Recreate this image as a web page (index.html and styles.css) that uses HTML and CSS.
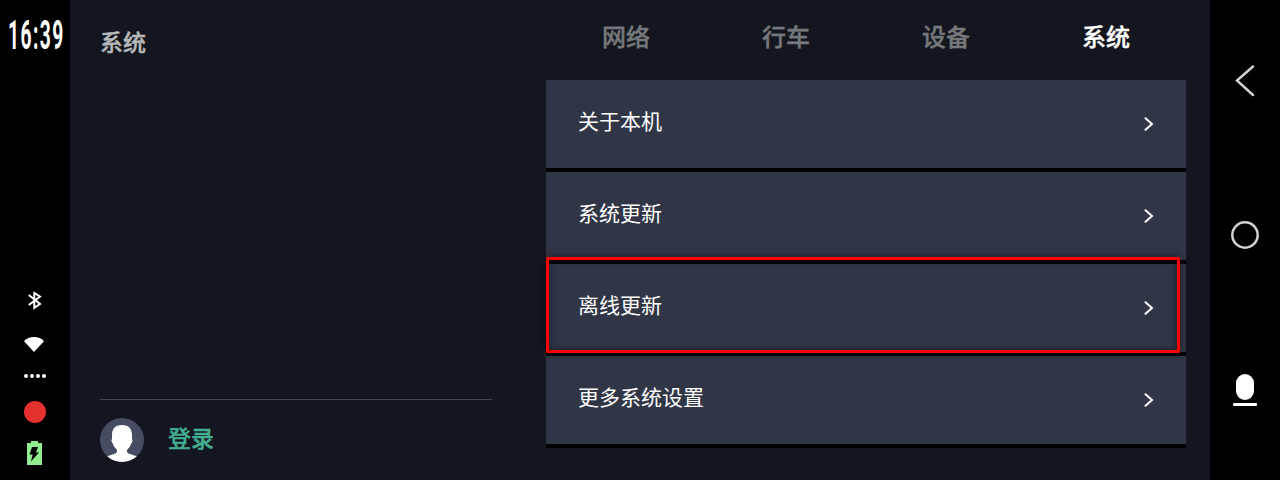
FILE: index.html
```html
<!DOCTYPE html>
<html lang="zh-CN">
  <head>
    <meta charset="UTF-8" />
    <meta name="viewport" content="width=device-width, initial-scale=1.0" />
    <title>系统</title>
    <link rel="stylesheet" href="styles.css">
  </head>
  <body>
    <div class="screen">
      <aside class="status-bar">
        <div class="clock"><span>16:39</span></div>
        <div class="status-icons">
          <svg class="bluetooth" width="14" height="20" viewBox="0 0 14 20">
            <path d="M.8 5L12 14 6.300 17.800V3L12 6.500 .8 15" />
          </svg>
          <svg class="wifi" width="20" height="15" viewBox="0 0 20 15">
            <path d="M0 4.2Q4 0 10 0T20 4.2L10 15Z" />
          </svg>
          <svg class="signal" width="22" height="4" viewBox="0 0 22 4">
            <circle cx="2" cy="2" r="2" />
            <circle cx="8" cy="2" r="2" />
            <circle cx="14" cy="2" r="2" />
            <circle cx="20" cy="2" r="2" />
          </svg>
          <div class="record"></div>
          <svg class="battery" width="15" height="24" viewBox="0 0 15 24">
            <path class="case" d="M4 0h7v2h4v22H0V2h4z" />
            <path class="bolt" d="M5 6h6l-2 5.500h3L4 20.500l1.600-7H2.600z" />
          </svg>
        </div>
      </aside>

      <section class="side-panel">
        <h1>系统</h1>
        <div class="account">
          <svg class="avatar" width="44" height="44" viewBox="0 0 44 44">
            <circle cx="22" cy="22" r="22" />
            <path d="M22 7C29 7 32 11 32 17V21C33 22 32.500 24 31.200 25.500C30.500 28 29 30 27.200 31.500C26.500 34 27.500 35.200 30 36L36.800 38.200A22 22 0 0 1 7.200 38.200L14 36C16.500 35.200 17.500 34 16.800 31.500C15 30 13.500 28 12.800 25.500C11.500 24 11 22 12 21V17C12 11 15 7 22 7Z" />
          </svg>
          <span>登录</span>
        </div>
      </section>

      <main class="settings">
        <nav class="tabs">
          <div class="tab">网络</div>
          <div class="tab">行车</div>
          <div class="tab">设备</div>
          <div class="tab active">系统</div>
        </nav>
        <div class="list">
          <div class="row">
            <span>关于本机</span>
            <svg class="arrow" width="10" height="14" viewBox="0 0 10 14"><path d="M1.500 1.200L8 7l-6.500 5.800" /></svg>
          </div>
          <div class="row">
            <span>系统更新</span>
            <svg class="arrow" width="10" height="14" viewBox="0 0 10 14"><path d="M1.500 1.200L8 7l-6.500 5.800" /></svg>
          </div>
          <div class="row">
            <span>离线更新</span>
            <svg class="arrow" width="10" height="14" viewBox="0 0 10 14"><path d="M1.500 1.200L8 7l-6.500 5.800" /></svg>
            <div class="marker"></div>
          </div>
          <div class="row">
            <span>更多系统设置</span>
            <svg class="arrow" width="10" height="14" viewBox="0 0 10 14"><path d="M1.500 1.200L8 7l-6.500 5.800" /></svg>
          </div>
        </div>
      </main>

      <aside class="nav-bar">
        <svg class="back" width="20" height="32" viewBox="0 0 20 32">
          <path d="M18 1.500L2 15.500 18 30" />
        </svg>
        <svg class="home" width="28" height="29" viewBox="0 0 28 29">
          <circle cx="14" cy="14" r="12.700" />
        </svg>
        <svg class="mic" width="24" height="32" viewBox="0 0 24 32">
          <rect x="3" y="0" width="18" height="26" rx="9" />
          <rect x="0" y="29" width="24" height="3" rx="1" />
        </svg>
      </aside>
    </div>
  </body>
</html>
```
FILE: styles.css
```css
/* General */
body {
  margin: 0;
  background: #000;
  color: #fff;
  font-family: "Noto Sans CJK SC", sans-serif;
}

svg {
  display: block;
}

.screen {
  display: flex;
  width: 1280px;
  height: 480px;
  background: #13161e;
  overflow: hidden;
}

/* Status bar */
.status-bar {
  display: flex;
  flex-direction: column;
  justify-content: space-between;
  box-sizing: border-box;
  width: 70px;
  padding: 15px 0 15px;
  background: #000;
}

.clock {
  padding-left: 8px;
  font: 700 40px/41px Roboto, sans-serif;
  letter-spacing: 3px;
}

.clock span {
  display: inline-block;
  transform: scaleX(0.48);
  transform-origin: left;
}

.status-icons {
  display: flex;
  flex-direction: column;
  align-items: center;
}

.bluetooth {
  fill: none;
  stroke: #fff;
  stroke-width: 2;
}

.wifi {
  margin-top: 27px;
  margin-right: 2px;
  fill: #fff;
}

.signal {
  margin-top: 22px;
  fill: #fff;
}

.record {
  width: 22px;
  height: 22px;
  margin-top: 23px;
  border-radius: 50%;
  background: #e53030;
}

.battery {
  margin-top: 18px;
  margin-right: 1px;
}

.case {
  fill: #90ee90;
}

.bolt {
  fill: #000;
}

/* Left panel */
.side-panel {
  display: flex;
  flex-direction: column;
  justify-content: space-between;
  box-sizing: border-box;
  width: 422px;
  padding: 24px 0 18px 30px;
}

h1 {
  margin: 0;
  color: #b8b9bb;
  font-size: 23px;
  font-weight: 500;
  line-height: 34px;
  -webkit-text-stroke: 0.4px;
}

.account {
  display: flex;
  align-items: center;
  gap: 24px;
  padding-top: 18px;
  border-top: 1px solid #46484b;
  color: #43ae92;
  font-size: 23px;
  font-weight: 500;
  line-height: 36px;
  -webkit-text-stroke: 0.4px;
}

.account span {
  margin-bottom: 6px;
}

.avatar {
  fill: #fff;
  stroke: none;
}

.avatar circle {
  fill: #464d63;
}

/* Settings */
.settings {
  width: 640px;
  margin: 0 24px 0 54px;
}

.tabs {
  display: flex;
  height: 80px;
}

.tab {
  flex: 1;
  color: #77787b;
  font-size: 24px;
  font-weight: 500;
  line-height: 72px;
  text-align: center;
  -webkit-text-stroke: 0.4px;
}

.tab.active {
  color: #fff;
}

.row {
  position: relative;
  display: flex;
  align-items: center;
  justify-content: space-between;
  height: 88px;
  padding: 0 32px;
  border-bottom: 4px solid #000;
  background: #313646;
  font-size: 21px;
}

.row span {
  margin-bottom: 9px;
}

.arrow {
  fill: none;
  stroke: #fff;
  stroke-width: 2;
  stroke-linecap: round;
}

.marker {
  position: absolute;
  z-index: 1;
  top: -7px;
  left: 0;
  box-sizing: border-box;
  width: 634px;
  height: 96px;
  border: 3px solid #f00;
  border-radius: 1px;
  box-shadow: 0 0 7px rgba(0, 0, 0, 0.5), inset 0 0 7px rgba(0, 0, 0, 0.5);
}

/* Navigation bar */
.nav-bar {
  display: flex;
  flex-direction: column;
  align-items: center;
  justify-content: space-between;
  box-sizing: border-box;
  width: 70px;
  padding: 65px 0 74px;
  background: #000;
}

.back,
.home {
  fill: none;
  stroke: #d2d2d2;
  stroke-width: 2.5;
  stroke-linecap: round;
}

.mic {
  fill: #fff;
}
```
